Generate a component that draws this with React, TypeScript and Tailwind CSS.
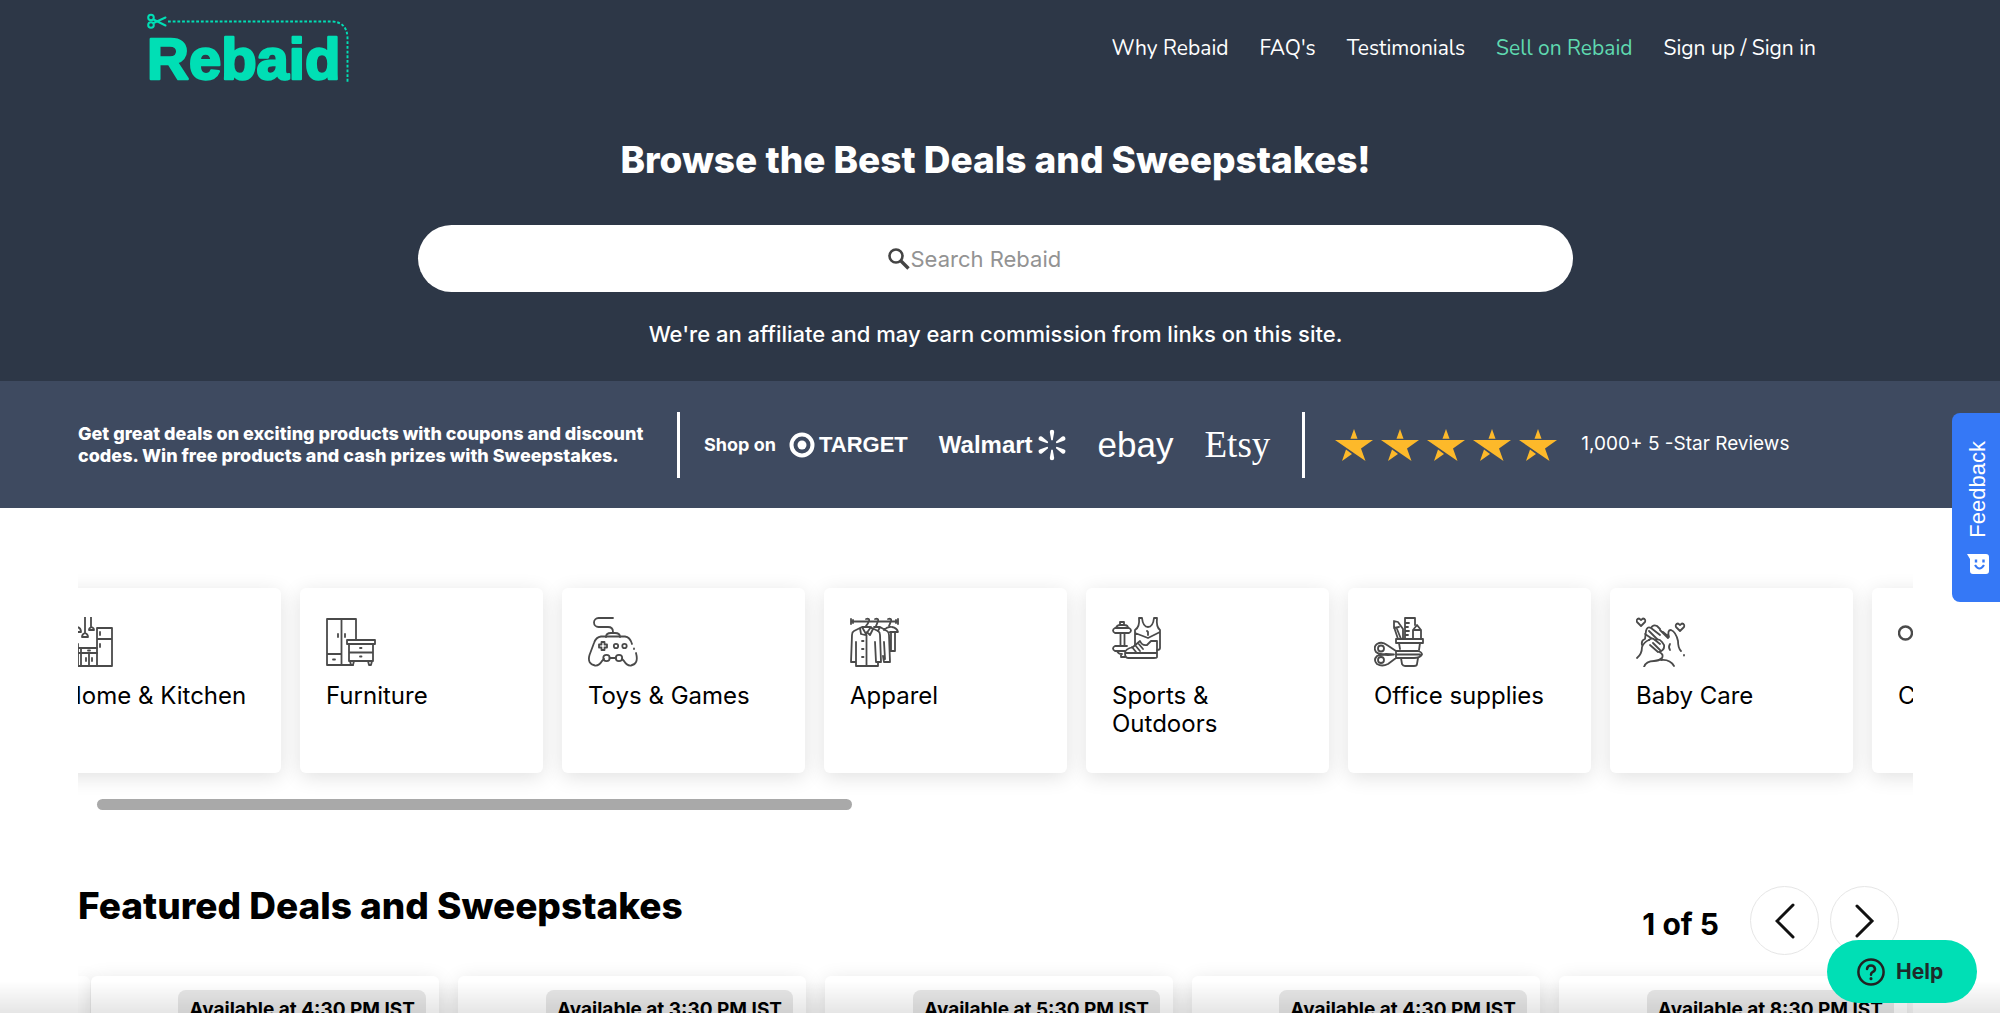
import type { ReactNode } from "react";
import { clsx } from "clsx";

const navLinks = [
  { label: "Why Rebaid", href: "#why" },
  { label: "FAQ's", href: "#faqs" },
  { label: "Testimonials", href: "#testimonials" },
  { label: "Sell on Rebaid", href: "#sell", accent: true },
  { label: "Sign up / Sign in", href: "#account" },
];

const Logo = () => (
  <svg width="204" height="80" viewBox="0 0 204 80" fill="none" stroke="#00dfb5" role="img" aria-label="Rebaid">
    {/* Scissors */}
    <g strokeWidth="2" strokeLinecap="round">
      <circle cx="4" cy="5.500" r="2.800" />
      <circle cx="4" cy="13" r="2.800" />
      <path d="M6.500 7.500L18.500 13.500M6.500 11L18.500 5.500" />
    </g>
    {/* Cut line */}
    <path d="M21 9.500H184Q200 9.500 200.500 26V70" strokeWidth="1.900" strokeDasharray="2.800 1.900" />
    <text
      x="0"
      y="67"
      fill="#00dfb5"
      strokeWidth="2.500"
      strokeLinejoin="round"
      fontSize="58"
      fontWeight="700"
      fontFamily="'Liberation Sans', Arial, sans-serif"
    >
      Rebaid
    </text>
  </svg>
);

const SearchIcon = () => (
  <svg width="22" height="22" viewBox="0 0 22 22" fill="none" stroke="#444" className="shrink-0">
    <circle cx="8" cy="8" r="6.500" strokeWidth="2.600" />
    <path d="M13 13l7.500 7.500" strokeWidth="3.400" />
  </svg>
);

const TargetLogo = () => (
  <div className="flex items-center gap-1">
    <svg width="26" height="26" viewBox="0 0 26 26" fill="none">
      <circle cx="13" cy="13" r="10.500" stroke="#fff" strokeWidth="4" />
      <circle cx="13" cy="13" r="4.500" fill="#fff" />
    </svg>
    <span className="font-['Liberation_Sans',Arial,sans-serif] text-[22px] leading-6 font-bold">TARGET</span>
  </div>
);

const WalmartLogo = () => (
  <div className="flex items-center gap-1">
    <span className="font-['Liberation_Sans',Arial,sans-serif] text-[24px] leading-6 font-bold">Walmart</span>
    <svg width="30" height="32" viewBox="0 0 30 32" fill="#fff">
      {[0, 60, 120, 180, 240, 300].map((deg) => (
        <path key={deg} d="M14.200 11L12.800 3Q12.700 .8 15 .8T17.200 3L15.800 11Q15 11.800 14.200 11Z" transform={`rotate(${deg} 15 16)`} />
      ))}
    </svg>
  </div>
);

const Star = () => (
  <svg width="38" height="32" viewBox="0 0 38 32" fill="#fdb92a">
    <path d="M19 0L22.500 9.800H15.500Z" />
    <path d="M0 11H38L26 19.500L30.500 32L0 11Z" />
    <path d="M11 20.500L17 25L7 32Z" />
  </svg>
);

const CategoryIcon = ({ children }: { children: ReactNode }) => (
  <svg
    width="50"
    height="50"
    viewBox="0 0 50 50"
    fill="none"
    stroke="#4a4a4a"
    strokeWidth="1.800"
    strokeLinecap="round"
    strokeLinejoin="round"
    aria-hidden="true"
  >
    {children}
  </svg>
);

const categories: { label: string; icon: ReactNode }[] = [
  {
    label: "Home & Kitchen",
    icon: (
      <>
        <path d="M21 0V16M27 0V10M12 0V10M9 15q-1-4 4-5q4 1 4 5zM18 20q0-3 3-4q3 1 3 4zM25 13q0-2 2.500-3q2.500 1 2.500 3z" />
        <path d="M33 11H48V49H33zM33 22H48M36 15v3M36 27v3" />
        <path d="M1 49H33M1 31H33M1 36H33M14 27V49M17 31V49M25 36V49M22 41v3M28 41v3M24 33.500h2M14 27H11" />
      </>
    ),
  },
  {
    label: "Furniture",
    icon: (
      <>
        <path d="M30 23V2H1V48H27M15.500 2V48M12 17v3M19 17v3M1 37H15.500M7 42.500h2" />
        <path d="M21 23H49V27H21zM23 27V44H47V27M23 35.500H47M34 31h1.500M34 39.500h1.500M24 44l1 4h2l1-4M42 44l1 4h2l1-4" />
      </>
    ),
  },
  {
    label: "Toys & Games",
    icon: (
      <>
        <path d="M25 1H10.500a4.500 4.500 0 0 0 0 9H20q5 0 5 5M18 20q0-4 5-4h4q5 0 5 4" />
        <path d="M44 27q-2-7-7-7.500H13Q8 20 6 26L1.500 38Q-1 47 7 48.500Q11 49 14 44l2-2M48 36q3 11-5 12.500Q39 49 36 44l-2-2M21.500 41H28M46 31.500v.5" />
        <path d="M13.500 25h3v2.500h2.500v3h-2.500v2.500h-3v-2.500H11v-3h2.500z" />
        <circle cx="28" cy="29" r="2.200" />
        <circle cx="36.500" cy="29" r="2.200" />
        <circle cx="18.500" cy="41" r="3.200" />
        <circle cx="31" cy="41" r="3.200" />
      </>
    ),
  },
  {
    label: "Apparel",
    icon: (
      <>
        <path d="M1 2v5M1 4.500H48M48 2v5M3 3v3M46 3v3M16 2q4-1 3 2t-3 5M25 2q4-1 3 2t-2 5M38 2q4-1 3 2t-2 5" />
        <path d="M10 11L4 14Q2 15 2 18L1 45H6M6 25V49H28V45M12 10l4 7l5-7M10 11l1 6l4 1l2-3l3 3l3-6l-3-2H12zM22 11l6 3q2 1 2 4l1 27H26L25 25M16.500 18V49M12 24h1.500M12 32h1.500M12 40h1.500" />
        <path d="M24 10h6l7 4q2 1 2 4l1 27H34l-1-6M30 10l-2 4M34 25l1 17M34 13q4-4 8-3q5 1 6 5h-8M45 16V34H40M41 16v18" />
      </>
    ),
  },
  {
    label: "Sports &\nOutdoors",
    icon: (
      <>
        <path d="M3 11H17q2 1 2 2.500T17 16H3q-2-1-2-2.500T3 11zM4 11q1-3 4-3h4q4 0 4 3M8 8V5h4v3M8.500 16V29M12.500 16V29M13 34H3q-2-1-2-2.500T3 29H15M5 34q1 3 5 3M9 37v3h4" />
        <path d="M23 28V13q5-3 4-12h3q1 9 6 9t6-9h3q-1 9 3 12V31q0 2-3 2M23 16L36 21L48 15M35 14l1 1v3" />
        <path d="M13 36q0-4 8-6l7-6q2 5 7 4l4-4h6V40q0 1-3 1H16q-3 0-3-5zM13 36H45M20 30l4 5M23 28l5 6M26 26l5 6" />
      </>
    ),
  },
  {
    label: "Office supplies",
    icon: (
      <>
        <path d="M22 22H49V26H22zM25 26l1 6M46 26l-1 7M27 41l1 6q1 2 3 2h9q3 0 3-2l1-6M31 22V1H41V8M31 6h4M31 10h3M31 14h4M31 18h3" />
        <path d="M24 22L20 10V4L24 5L29 12V22M20 11l5-1M39 22V13L43 8L47 13V22M39 13H47M23 12l4 10" />
        <path d="M22 34H44Q48 35 48 37.500Q46 41 40 41H22L14 47Q8 50 3 47Q-1 43 3 39Q6 37.500 14 38L20 37.500L12 37Q5 38 2 35Q-1 30 3 27Q8 24 13 28zM22 34V41M22 37.500H46" />
        <circle cx="7" cy="31.500" r="3" />
        <circle cx="7" cy="43" r="3" />
      </>
    ),
  },
  {
    label: "Baby Care",
    icon: (
      <>
        <path d="M5 9L1 5Q0 2 3 1.500L5 3L7 1.500Q10 2 9 5zM44 14L40 10Q39 7 42 6.500L44 8L46 6.500Q49 7 48 10z" />
        <path d="M1 41Q6 37 6 30Q8 25 13 23M6 28Q5 23 9 22L10 14Q11 9 15 11L24 18M15 11Q17 7 21 9L24 12M9 17l6 4M13 14l8 8" />
        <path d="M13 23Q16 20 19 23L24 27M19 23q4-2 7 2l2 3M17 26l7 7M14 28l8 7M28 28q1 5-5 7q5 2 3 6q-3 3-8 3q-8 0-10 6M25 43q9-1 13 6" />
        <path d="M24 13l8 8M27 15l6 5Q31 13 35 13Q40 15 42 24Q42 31 45 34M34 27q-2 3 0 6M48 38v.5" />
      </>
    ),
  },
  {
    label: "Clothing",
    icon: <path d="M1 16a6.500 6.500 0 1 0 13 0a6.500 6.500 0 1 0-13 0M14 16H24" strokeWidth="2.400" />,
  },
];

const dealTimes = ["4:30 PM IST", "3:30 PM IST", "5:30 PM IST", "4:30 PM IST", "8:30 PM IST"];

const Header = () => (
  <header className="flex items-start justify-between pt-3 pr-[184px] pl-[147px]">
    <a href="#home">
      <Logo />
    </a>
    <nav className="flex gap-[31px] pt-5 font-[Nunito,Lato,sans-serif] text-[21px] leading-8">
      {navLinks.map((link) => (
        <a key={link.label} href={link.href} className={clsx(link.accent && "text-[#5fd9b0]")}>
          {link.label}
        </a>
      ))}
    </nav>
  </header>
);

const Hero = () => (
  <section className="flex flex-col items-center pt-11 pr-[9px] pb-[31px]">
    <h1 className="text-[37px] leading-12 font-extrabold">Browse the Best Deals and Sweepstakes!</h1>
    <form className="mt-[41px] flex h-[67px] w-[58%] items-center justify-center rounded-full bg-white">
      <label htmlFor="search">
        <span className="sr-only">Search Rebaid</span>
        <SearchIcon />
      </label>
      <input
        id="search"
        type="text"
        placeholder="Search Rebaid"
        className="h-full w-48 text-[22px] text-gray-800 outline-none placeholder:text-[#939393]"
      />
    </form>
    <p className="mt-[26px] text-[22px] leading-8 font-medium">
      We're an affiliate and may earn commission from links on this site.
    </p>
  </section>
);

const PromoStrip = () => (
  <section className="flex h-[127px] items-center bg-[#3e4a60] pl-[78px] text-white">
    <p className="w-[599px] text-[18px] leading-[22px] font-extrabold">
      Get great deals on exciting products with coupons and discount
      <br />
      codes. Win free products and cash prizes with Sweepstakes.
    </p>
    <div className="h-[66px] w-[3px] bg-white" />
    <div className="flex items-center pl-6">
      <span className="w-[85px] text-[18px] font-bold">Shop on</span>
      <div className="flex items-center gap-[31px]">
        <TargetLogo />
        <WalmartLogo />
        <span className="font-['Liberation_Sans',Arial,sans-serif] text-[35px] leading-8">ebay</span>
        <span className="font-['Liberation_Serif',serif] text-[37px] leading-8">Etsy</span>
      </div>
    </div>
    <div className="ml-8 h-[66px] w-[3px] bg-white" />
    <div className="flex gap-2 pl-[30px]">
      {[1, 2, 3, 4, 5].map((n) => (
        <Star key={n} />
      ))}
    </div>
    <span className="pl-6 text-[19px]">1,000+ 5 -Star Reviews</span>
  </section>
);

const Categories = () => (
  <section className="mr-[87px] ml-[78px] overflow-hidden pt-20">
    <div className="-ml-10 flex gap-[19px] pb-[26px]">
      {categories.map((category) => (
        <a
          key={category.label}
          href="#category"
          className="h-[185px] w-[243px] shrink-0 rounded-md bg-white pt-[29px] pr-6 pl-[26px] shadow-[0_4px_20px_rgba(0,0,0,0.12)]"
        >
          <CategoryIcon>{category.icon}</CategoryIcon>
          <span className="mt-[15px] block text-[24px] leading-7 whitespace-pre">{category.label}</span>
        </a>
      ))}
    </div>
    <div className="ml-[19px] h-[11px] w-[755px] rounded-full bg-[#a9a9a9]" />
  </section>
);

const ArrowButton = ({ label, d }: { label: string; d: string }) => (
  <button
    type="button"
    aria-label={label}
    className="flex size-[69px] items-center justify-center rounded-full border border-[#e6e6e6] bg-white"
  >
    <svg width="20" height="36" viewBox="0 0 20 36" fill="none" stroke="#111" strokeWidth="3" strokeLinecap="round">
      <path d={d} />
    </svg>
  </button>
);

const Deals = () => (
  <section className="mr-[87px] ml-[78px]">
    <div className="flex items-start justify-between pt-[76px] pr-[14px] pb-[21px]">
      <h2 className="text-[37px] leading-10 font-extrabold">Featured Deals and Sweepstakes</h2>
      <div className="flex items-center">
        <span className="mr-[31px] pt-2 text-[30px] font-bold">1 of 5</span>
        <div className="flex gap-[11px]">
          <ArrowButton label="Previous" d="M18 2L2 18L18 34" />
          <ArrowButton label="Next" d="M2 3L17 18L2 33" />
        </div>
      </div>
    </div>
    <div className="-mt-6 flex h-64 gap-[19px] overflow-hidden pt-6">
      <div className="-mr-[18px] h-56 w-3 shrink-0 rounded-r-md bg-white shadow-[0_4px_20px_rgba(0,0,0,0.12)]" />
      {dealTimes.map((time, i) => (
        <article
          key={i}
          className="flex h-56 w-[348px] shrink-0 items-start justify-end rounded-md bg-white pt-[14px] pr-[13px] shadow-[0_4px_20px_rgba(0,0,0,0.12)]"
        >
          <span className="rounded-lg bg-[#e8e8e8] px-[11px] py-[6px] text-[19px] leading-7 font-bold">
            Available at {time}
          </span>
        </article>
      ))}
    </div>
  </section>
);

const FeedbackTab = () => (
  <button
    type="button"
    className="fixed top-[413px] right-0 flex h-[189px] w-[48px] flex-col items-center rounded-l-lg bg-[#3578f6] pt-7 pl-1 text-white"
  >
    <span className="rotate-180 font-['Liberation_Sans',Arial,sans-serif] text-[22px] leading-7 [writing-mode:vertical-rl]">
      Feedback
    </span>
    <svg width="22" height="20" viewBox="0 0 22 20" className="mt-4">
      <path d="M0 0H19Q22 0 22 3V17Q22 20 19 20H6Q3 20 3 17V5Z" fill="#fff" />
      <path d="M8 11Q12.500 18 17 11" fill="none" stroke="#3578f6" strokeWidth="2.200" />
      <path d="M9 5.500v3M16.500 5.500v3" stroke="#3578f6" strokeWidth="2.400" />
    </svg>
  </button>
);

const HelpButton = () => (
  <button
    type="button"
    className="fixed right-[23px] bottom-[10px] flex h-[63px] w-[150px] items-center gap-[11px] rounded-full bg-[#00dfb5] pl-[30px] text-[21px] font-bold text-[#1f2a2a]"
  >
    <svg width="28" height="28" viewBox="0 0 28 28" fill="none" stroke="#222" strokeWidth="2.500" strokeLinecap="round">
      <circle cx="14" cy="14" r="12.600" />
      <path d="M10 11Q10.500 7.500 14 7.500T18 11Q18 13 15.500 14.200Q14 15 14 16.800" />
      <path d="M14 20.500v.2" strokeWidth="3" />
    </svg>
    Help
  </button>
);

export default function App() {
  return (
    <div className="relative h-screen overflow-hidden bg-white font-[Inter,sans-serif] text-black">
      <div className="bg-[#2d3747] text-white">
        <Header />
        <Hero />
      </div>
      <PromoStrip />
      <main>
        <Categories />
        <Deals />
      </main>
      <div className="pointer-events-none fixed inset-x-0 bottom-0 h-8 bg-linear-to-t from-black/10 to-transparent" />
      <FeedbackTab />
      <HelpButton />
    </div>
  );
}
